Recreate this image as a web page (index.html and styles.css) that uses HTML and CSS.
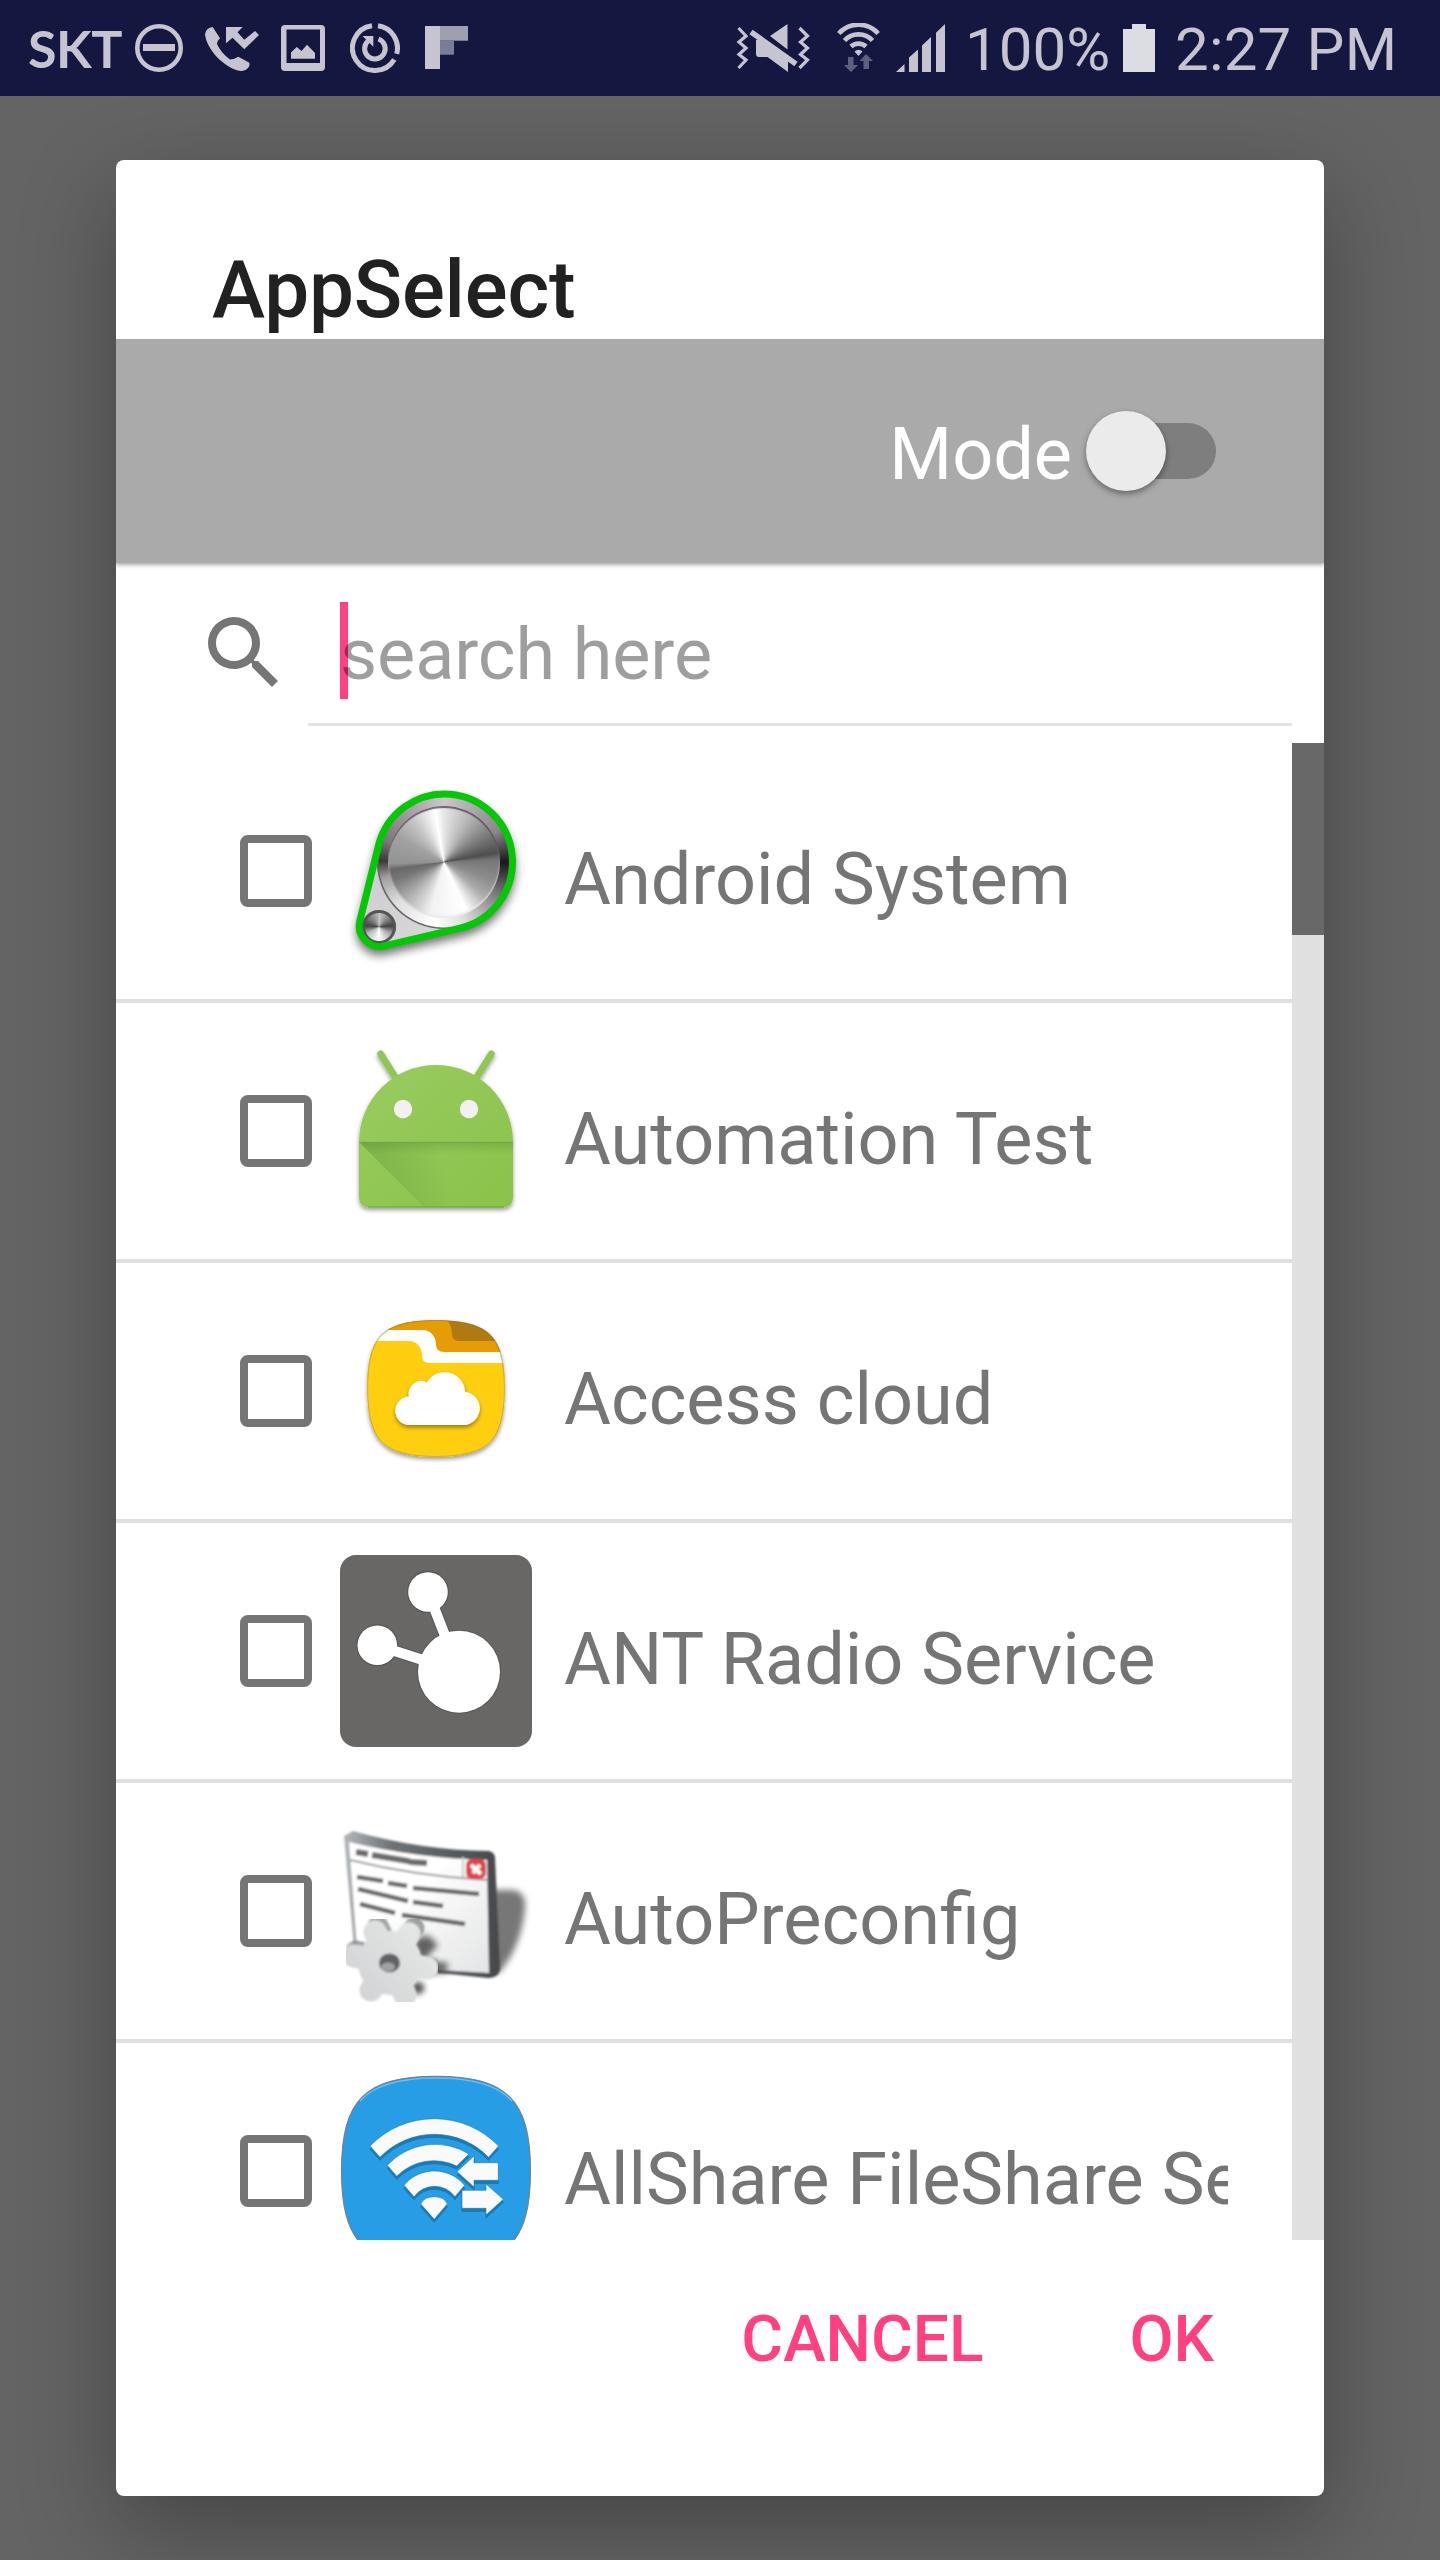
FILE: index.html
```html
<!DOCTYPE html>
<html lang="en">
<head>
<meta charset="utf-8">
<title>AppSelect</title>
<link rel="stylesheet" href="styles.css">
</head>
<body>
<header class="status">
  <div class="status-left">
    <span class="carrier">SKT</span>
    <svg class="s-dnd" width="48" height="48" viewBox="135 24 48 48"><circle cx="159" cy="48" r="21.7" fill="none" stroke="#c5c4d0" stroke-width="4.6"/><path fill="#c5c4d0" d="M143 44h32v7h-32z"/></svg>
    <svg class="s-call" width="54" height="48" viewBox="205 24 54 48"><g fill="#c5c4d0"><path d="M212.7 27L220 38.3Q217 41 217 44Q221 53 230 59.5Q234 59.5 238.3 56.7L249 62.500Q250.500 65 248 68Q245 71.500 241 71C225 69 206 49 205 34Q206 28 212.700 27Z"/><path d="M226 27H242.700L237.500 32.300L244.300 39.700L255 31L259 35L244.300 49.300L232.500 37.700L226 43.300Z"/></g></svg>
    <svg class="s-photo" width="44" height="48" viewBox="281 24 44 48"><g fill="#c5c4d0"><path fill-rule="evenodd" d="M285 25H321Q325 25 325 29V67Q325 71 321 71H285Q281 71 281 67V29Q281 25 285 25ZM286.500 29.500V63H320V29.500Z"/><path d="M291 58.700V52.500L296.700 47L301.500 51L307 44.700L315 53V58.700Z"/></g></svg>
    <svg class="s-sync" width="50" height="50" viewBox="350 23 50 50"><g fill="none" stroke="#c5c4d0" stroke-width="5"><path d="M378 25.700A22.500 22.500 0 0 1 396.700 53.800"/><path d="M394.300 59.500A22.500 22.500 0 1 1 372 25.700"/><path d="M378.500 39A10.300 10.300 0 1 1 368 41"/></g><path fill="#c5c4d0" d="M362.500 36H373.300V46.700Z"/></svg>
    <svg class="s-flip" width="43" height="44" viewBox="425 26 43 44"><path fill="#c5c4d0" d="M425 26h15v43h-15z"/><path fill="#9fa0af" d="M440 26h28v14.700h-28z"/><path fill="#7b7d94" d="M440 40.700h14v14h-14z"/></svg>
  </div>
  <div class="status-right">
    <svg class="s-mute" width="74" height="48" viewBox="736 24 74 48"><g fill="none" stroke="#c5c4d0" stroke-width="3.200"><path d="M738.500 28L746 36L739 42L746 48L739 54.500L746 60L738.500 68"/><path d="M799.500 28L807.500 36L800.500 42L807.500 48L800.500 54.500L807.500 60L799.500 68"/><path stroke-width="5.500" d="M751 32L796 64"/></g><g fill="#c5c4d0"><path d="M787.500 24V49.500L770 36Z"/><path d="M756 40L762 39L788 60V72L767.500 57H759Q756 57 756 54Z"/></g></svg>
    <svg class="s-wifi" width="44" height="50" viewBox="837 23 44 50"><g fill="none" stroke="#c5c4d0" stroke-width="4.700"><path d="M838.800 33.500A26.500 26.500 0 0 1 878.200 33.500"/><path d="M844.500 40.500A19 19 0 0 1 872.500 40.500"/><path d="M851 46.500A11 11 0 0 1 866 46.500"/></g><path fill="#c5c4d0" d="M854.500 51.500Q858.500 48 862.500 51.500L858.500 56Z"/><path fill="#5c6080" d="M848 57h5.500v8h4.500l-7 7l-7-7h4zM863.500 69h5.500v-8h4l-7-7l-6.500 7h4z"/></svg>
    <svg class="s-signal" width="49" height="48" viewBox="896 24 49 48"><path fill="#c5c4d0" d="M896 72L904.500 64V72ZM909 72V57.500L918 49.500V72ZM922 72V45.500L931 37V72ZM936 72V32.700L945 24V72Z"/></svg>
    <span class="pct">100%</span>
    <svg class="s-batt" width="32" height="48" viewBox="1123 24 32 48"><path fill="#dcdce3" d="M1132 24h14v5h9v43h-32v-43h9z"/></svg>
    <span class="clock">2:27 PM</span>
  </div>
</header>

<main class="dialog">
  <h1 class="title">AppSelect</h1>
  <div class="mode">
    <span class="mode-label">Mode</span>
    <span class="switch"><span class="thumb"></span></span>
  </div>
  <div class="search">
    <svg class="search-icon" width="96" height="96" viewBox="0 0 24 24"><path fill="#757575" d="M15.500 14h-.79l-.28-.27A6.471 6.471 0 0 0 16 9.500 6.500 6.500 0 1 0 9.500 16c1.610 0 3.090-.59 4.230-1.570l.27.280v.79l5 4.990L20.490 19l-4.990-5zm-6 0C7.010 14 5 11.990 5 9.500S7.010 5 9.500 5 14 7.010 14 9.500 11.990 14 9.500 14z"/></svg>
    <div class="field"><span class="caret"></span><span class="hint">search here</span></div>
  </div>
  <div class="list">
    <ul class="rows">
      <li class="row">
        <span class="box"></span>
        <svg class="app" viewBox="0 0 192 192">
          <defs>
            <filter id="soft" x="-20%" y="-20%" width="140%" height="140%"><feGaussianBlur stdDeviation="5"/></filter>
            <linearGradient id="plate" x1="0" y1="0" x2="0" y2="1"><stop offset="0" stop-color="#c8c2c8"/><stop offset="1" stop-color="#d8d6d8"/></linearGradient>
          </defs>
          <path d="M38.500 70.700A68 68 0 1 1 120.100 153.100L44.400 170.900A20.500 20.500 0 0 1 19.800 146.100Z" transform="translate(0 6)" fill="#000" stroke="#000" stroke-width="6" opacity=".55" filter="url(#soft)"/>
          <path d="M38.500 70.700A68 68 0 1 1 120.100 153.100L44.400 170.900A20.500 20.500 0 0 1 19.800 146.100Z" fill="url(#plate)"/>
          <foreignObject x="37" y="20" width="136" height="136"><div class="rim"><div class="knob"></div></div></foreignObject>
          <foreignObject x="22" y="135" width="34" height="34"><div class="mini"></div></foreignObject>
          <path d="M38.500 70.700A68 68 0 1 1 120.100 153.100L44.400 170.900A20.500 20.500 0 0 1 19.800 146.100Z" fill="none" stroke="#04c804" stroke-width="7"/>
        </svg>
        <span class="name">Android System</span>
      </li>
      <li class="row">
        <span class="box"></span>
        <svg class="app" viewBox="0 0 192 192">
          <defs>
            <filter id="drop" x="-20%" y="-20%" width="140%" height="140%"><feDropShadow dx="0" dy="2.500" stdDeviation="2" flood-opacity=".4"/></filter>
            <linearGradient id="green" x1="0" y1="0" x2="1" y2="1"><stop offset="0" stop-color="#99cc60"/><stop offset="1" stop-color="#8ac24a"/></linearGradient>
            <linearGradient id="fold" gradientUnits="userSpaceOnUse" x1="40" y1="125" x2="100" y2="112"><stop offset="0" stop-color="#558b2f" stop-opacity=".3"/><stop offset="1" stop-color="#558b2f" stop-opacity="0"/></linearGradient>
            <linearGradient id="foldTop" x1="0" y1="0" x2="0" y2="1"><stop offset="0" stop-color="#33691e" stop-opacity=".22"/><stop offset="1" stop-color="#33691e" stop-opacity="0"/></linearGradient>
          </defs>
          <g filter="url(#drop)">
            <path d="M40.700 19L57 45M151.300 19L135 45" stroke="#8fc654" stroke-width="7" stroke-linecap="round"/>
            <path fill="url(#green)" d="M19 107A77 77 0 0 1 173 107V161.500Q173 172.500 162 172.500H30Q19 172.500 19 161.500Z"/>
          </g>
          <path fill="url(#fold)" d="M19 107H173V161.500Q173 172.500 162 172.500H84.500Z"/>
          <path fill="url(#foldTop)" d="M19 107H173V119H31Z"/>
          <path d="M19 107.300H173" stroke="#78a648" stroke-width="1"/>
          <path d="M28 172H164" stroke="#6ea03a" stroke-width="1"/>
          <circle cx="63" cy="74" r="9.200" fill="#f1f1f1"/><circle cx="129" cy="74" r="9.200" fill="#f1f1f1"/>
        </svg>
        <span class="name">Automation Test</span>
      </li>
      <li class="row">
        <span class="box"></span>
        <svg class="app" viewBox="0 0 192 192">
          <defs><clipPath id="sq"><path d="M96 25.300C150 25.300 164.700 42 164.700 93.500S150 161.700 96 161.700 27.300 145 27.300 93.500 42 25.300 96 25.300Z"/></clipPath></defs>
          <path filter="url(#drop)" fill="#ccc" d="M96 25.300C150 25.300 164.700 42 164.700 93.500S150 161.700 96 161.700 27.300 145 27.300 93.500 42 25.300 96 25.300Z"/>
          <g clip-path="url(#sq)">
            <path fill="#b07a10" d="M20 20H172V100H20Z"/>
            <path fill="#e69c05" d="M20 20H100Q111.700 26 111.700 38Q112 46 119 46H172V100H20Z"/>
            <path fill="#fff" d="M20 35H82.300C91 35 96 42 96 49Q96 57 104 57H172V100H20Z"/>
            <path fill="#ffcf0f" d="M20 46H69C77 46 82 53 82 60Q82 68 89 68H172V170H20Z"/>
            <path d="M96 25.300C150 25.300 164.700 42 164.700 93.500S150 161.700 96 161.700 27.300 145 27.300 93.500 42 25.300 96 25.300Z" fill="none" stroke="#8a7a30" stroke-opacity=".45" stroke-width="1.500"/>
          </g>
          <path filter="url(#drop)" fill="#fff" d="M70 130A14 14 0 0 1 69 101.500A12.500 12.500 0 0 1 87 87.500A20.300 20.300 0 0 1 125 96.700A16.700 16.700 0 0 1 121 130Z"/>
        </svg>
        <span class="name">Access cloud</span>
      </li>
      <li class="row">
        <span class="box"></span>
        <svg class="app" viewBox="0 0 192 192">
          <rect width="192" height="192" rx="16" fill="#686765"/>
          <g fill="#575654"><circle cx="119" cy="116.700" r="42"/><circle cx="88" cy="37" r="21"/><circle cx="37.300" cy="90.300" r="21"/></g>
          <path d="M119 116.700L88 37M119 116.700L37.300 90.300" stroke="#575654" stroke-width="12"/>
          <path d="M119 116.700L88 37M119 116.700L37.300 90.300" stroke="#fff" stroke-width="10.300"/>
          <g fill="#fff"><circle cx="119" cy="116.700" r="41"/><circle cx="88" cy="37" r="19.800"/><circle cx="37.300" cy="90.300" r="19.800"/></g>
        </svg>
        <span class="name">ANT Radio Service</span>
      </li>
      <li class="row">
        <span class="box"></span>
        <svg class="app" viewBox="0 0 192 192">
          <defs>
            <filter id="b3" x="-30%" y="-30%" width="160%" height="160%"><feGaussianBlur stdDeviation="3"/></filter>
            <filter id="b1" x="-10%" y="-10%" width="120%" height="120%"><feGaussianBlur stdDeviation="1.100"/></filter>
            <linearGradient id="page" x1="0" y1="0" x2="1" y2="1"><stop offset=".4" stop-color="#fff"/><stop offset="1" stop-color="#e3e4e5"/></linearGradient>
            <linearGradient id="gear" gradientUnits="userSpaceOnUse" x1="10" y1="190" x2="95" y2="110"><stop offset="0" stop-color="#cfd1d2"/><stop offset="1" stop-color="#e8e9e9"/></linearGradient>
            <linearGradient id="frame" x1="0" y1="0" x2="1" y2="0"><stop offset="0" stop-color="#b4b7ba"/><stop offset=".3" stop-color="#6f7377"/><stop offset="1" stop-color="#45484b"/></linearGradient>
          </defs>
          <path filter="url(#b3)" fill="#777" d="M150 75H174Q186 78 185 92Q182 130 160 157H150Z"/>
          <g filter="url(#b1)">
            <path fill="url(#frame)" d="M4 21L13 16Q80 35 149 36Q154 37 155 42L160 155Q158 163 148 163L98 158L14 132Z"/>
            <path fill="url(#page)" d="M9 27Q75 43 147 45L149 158L100 155L17 132Z"/>
            <path d="M10 45Q75 61 147 65" fill="none" stroke="#9a9da0" stroke-width="2"/>
            <path d="M123 42V62" stroke="#ccc" stroke-width="2"/>
            <g stroke="#3c3c3c" stroke-width="4.500" fill="none" opacity=".75">
              <path stroke-width="6" d="M16 37L28 39M32 40L68 46L71 47L87 48"/>
              <path d="M17 62L43 66M48 68L67 71M73 73L139 79"/>
              <path d="M18 74L68 86M73 87L103 91"/>
              <path d="M20 89L55 98M62 100L125 109"/>
            </g>
            <rect x="126" y="44" width="20" height="20" rx="6" fill="#dd4348"/>
            <path d="M131 50L141 59M140 50L133 58" stroke="#fff" stroke-width="4"/>
          </g>
          <g filter="url(#b3)" opacity=".75"><path fill="#333" d="M72 125L88 120L98 130L84 145L108 148L106 158L84 158Z"/><circle cx="78" cy="173" r="6"/></g>
          <g filter="url(#b1)">
            <g transform="translate(4 -3)" stroke="#7c7e80" stroke-width="21" stroke-linecap="round" opacity=".7"><path d="M50 148L34 114M50 148L70 116M50 148L86 155M50 148L12 139"/></g>
            <g stroke="url(#gear)" stroke-width="23" stroke-linecap="round"><path d="M50 148L35 117M50 148L69 119M50 148L87 153M50 148L65 180M50 148L31 175M50 148L14 141"/></g>
            <circle cx="50" cy="148" r="32" fill="url(#gear)"/>
            <ellipse cx="49.500" cy="148" rx="10.500" ry="9.500" fill="#606264"/>
            <ellipse cx="48" cy="152" rx="7" ry="4.500" fill="#9fa1a3"/>
          </g>
        </svg>
        <span class="name">AutoPreconfig</span>
      </li>
      <li class="row">
        <span class="box"></span>
        <svg class="app" viewBox="0 0 192 192">
          <defs>
            <g id="share">
              <path d="M30 71A89.400 89.400 0 0 1 158.600 71L148.600 82.300A75.600 75.600 0 0 0 40 82.300Z"/>
              <path d="M47.300 90.300A64.600 64.600 0 0 1 129 79L116.700 91A52 52 0 0 0 56.700 101.300Z"/>
              <path d="M64 110.300A39.200 39.200 0 0 1 124.600 110.300L115 121.700A25.400 25.400 0 0 0 74 121.700Z"/>
              <path d="M80.700 129Q84 121.700 94.300 121.700T107.300 129L94.300 144.300Z"/>
              <path d="M117 96.700L134 81V87.700H158.300V105.300H134V112Z"/>
              <path d="M122 115.300H146V109L163.300 124.300L146 140V133.300H122Z"/>
            </g>
          </defs>
          <path fill="#279de6" stroke="#77818a" stroke-width="1.200" d="M96 1.300C166 1.300 190.500 24 190.500 96S166 190.700 96 190.700 1.500 168 1.500 96 26 1.300 96 1.300Z"/>
          <path fill="none" stroke="#6cbcf0" stroke-width="1.500" d="M20 26Q40 3 96 3T172 26"/>
          <use href="#share" y="3" fill="#1b79b3" stroke="#1b79b3" stroke-width="1"/>
          <use href="#share" fill="#fafafa" stroke="#1b79b3" stroke-width=".6"/>
        </svg>
        <span class="name">AllShare FileShare Service</span>
      </li>
    </ul>
    <div class="scroll"><div class="scroll-thumb"></div></div>
  </div>
  <div class="actions"><span class="btn">CANCEL</span><span class="btn">OK</span></div>
</main>
</body>
</html>
```
FILE: styles.css
```css
* { box-sizing: border-box; }
body {
  margin: 0;
  width: 1440px;
  height: 2560px;
  overflow: hidden;
  background: #646464;
  font-family: Roboto, "Liberation Sans", sans-serif;
  display: flex;
  flex-direction: column;
  align-items: center;
}
svg { display: block; flex: none; }

/* Status bar */
.status {
  position: relative;
  z-index: 1;
  flex: none;
  width: 1440px;
  height: 96px;
  background: #141840;
  color: #c5c4d0;
  display: flex;
  justify-content: space-between;
  white-space: nowrap;
}
.status-left, .status-right { display: flex; align-items: center; height: 96px; }
.carrier {
  width: 107px;
  margin-left: 28px;
  font: 700 52px/94px Lato, sans-serif;
  letter-spacing: -.5px;
}
.s-call { margin-left: 22px; }
.s-photo { margin-left: 22px; }
.s-sync { margin-left: 25px; }
.s-flip { margin-left: 25px; }
.s-wifi { margin-left: 27px; }
.s-signal { margin-left: 15px; }
.pct, .clock { font-size: 60px; line-height: 96px; padding-top: 4px; }
.pct { width: 158px; margin-left: 20px; }
.clock { width: 265px; margin-left: 20px; letter-spacing: .2px; }

/* Dialog */
.dialog {
  flex: none;
  width: 1208px;
  height: 2336px;
  margin-top: 64px;
  background: #fff;
  border-radius: 8px;
  box-shadow: 0 32px 96px rgba(0, 0, 0, .32);
  display: flex;
  flex-direction: column;
}
.title {
  margin: 0;
  height: 179px;
  padding: 83px 0 0 96px;
  font-size: 80px;
  line-height: 94px;
  font-weight: 500;
  letter-spacing: -.2px;
  color: #212121;
}
.mode {
  position: relative;
  height: 224px;
  background: #aaa;
  box-shadow: 0 2px 4px rgba(0, 0, 0, .35);
  clip-path: inset(0 0 -10px 0);
  display: flex;
  align-items: center;
  justify-content: flex-end;
  padding-right: 108px;
}
.mode-label { font-size: 72px; line-height: 84px; color: #fff; padding-top: 7px; margin-right: 18px; }
.switch {
  width: 126px;
  height: 56px;
  border-radius: 28px;
  background: #7e7e7e;
  display: flex;
  align-items: center;
}
.thumb {
  width: 80px;
  height: 80px;
  flex: none;
  margin-left: -4px;
  border-radius: 50%;
  background: #ebebeb;
  box-shadow: 0 3px 6px rgba(0, 0, 0, .4);
}
.search { height: 180px; display: flex; padding: 0 32px 0 80px; }
.search-icon { margin-top: 42px; }
.field {
  width: 984px;
  height: 163px;
  margin-left: 16px;
  border-bottom: 3px solid #e3e3e3;
  display: flex;
  padding: 39px 0 0 32px;
}
.caret { width: 8px; height: 97px; background: #ff4081; margin-right: -8px; }
.hint { position: relative; font-size: 72px; line-height: 84px; padding-top: 11px; letter-spacing: -.1px; color: rgba(0, 0, 0, .38); }

/* App list */
.list { height: 1497px; display: flex; overflow: hidden; }
.rows { width: 1176px; margin: 0; padding: 0; list-style: none; }
.row {
  height: 260px;
  border-bottom: 4px solid #e0e0e0;
  display: flex;
  padding: 32px 64px 0 124px;
}
.box {
  flex: none;
  width: 72px;
  height: 72px;
  margin-top: 60px;
  border: 8px solid #757575;
  border-radius: 8px;
}
.app { width: 192px; height: 192px; margin-left: 28px; }
.name {
  flex: 1;
  min-width: 0;
  margin-left: 32px;
  padding-top: 63px;
  font-size: 72px;
  line-height: 84px;
  color: #757575;
  white-space: nowrap;
  overflow: hidden;
}
.scroll { width: 32px; background: #e0e0e0; }
.scroll-thumb { height: 192px; background: #686868; }

/* Brushed metal dials */
.rim {
  width: 134px;
  height: 134px;
  border-radius: 50%;
  display: grid;
  place-items: center;
  box-shadow: inset 0 0 0 1.5px #666;
  background: conic-gradient(#cdc6cd 0deg, #8c858c 60deg, #1a181a 90deg, #7a757a 120deg, #ddd 160deg, #fff 190deg, #ddd 230deg, #a29ea2 255deg, #3c383c 271deg, #7c777c 290deg, #cdc6cd 360deg);
}
.knob {
  width: 112px;
  height: 112px;
  border-radius: 50%;
  box-shadow: inset 0 2px 1px rgba(70, 70, 70, .8), inset 0 -2px 2px rgba(230, 230, 230, .8);
  background: conic-gradient(#e6e6e6 0deg, #b5b5b5 30deg, #777 60deg, #4e4e4e 80deg, #777 88deg, #8b8b8b 110deg, #aaa 130deg, #fff 155deg, #f2f2f2 195deg, #b0b0b0 225deg, #777 250deg, #686868 262deg, #939393 268deg, #a2a2a2 300deg, #c8c8c8 325deg, #fff 350deg, #e6e6e6 360deg);
}
.mini {
  width: 34px;
  height: 34px;
  border-radius: 50%;
  box-shadow: inset 0 0 0 3px #555;
  background: conic-gradient(#ccc 0deg, #444 85deg, #aaa 120deg, #fff 180deg, #bbb 240deg, #444 275deg, #bbb 360deg);
}

/* Buttons */
.actions { display: flex; justify-content: flex-end; padding: 62px 110px 0 0; gap: 146px; }
.btn { font-size: 64px; line-height: 76px; font-weight: 500; color: #ff4081; }
```
